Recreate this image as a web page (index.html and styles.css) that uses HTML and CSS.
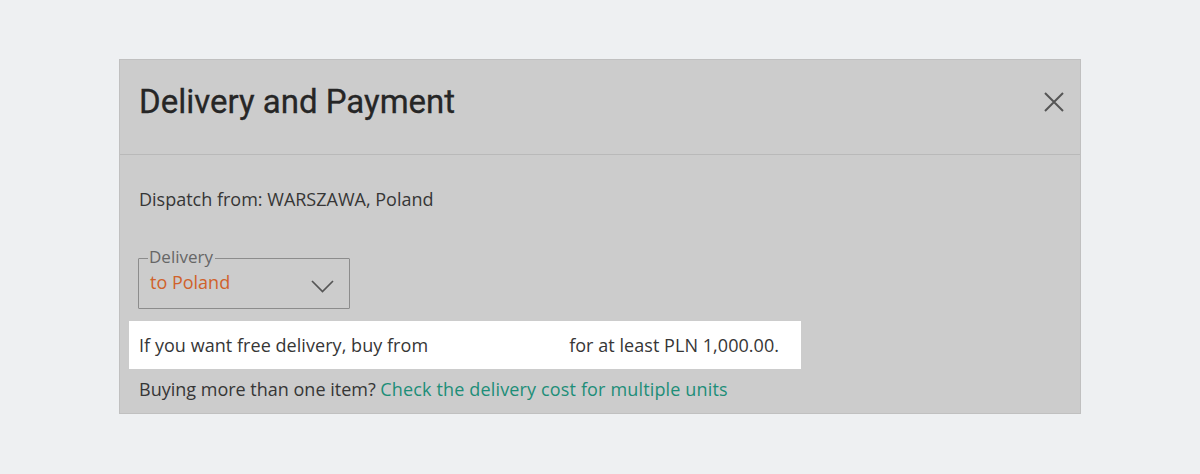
FILE: index.html
```html
<!DOCTYPE html>
<html>
<head>
<meta charset="utf-8">
<link rel="stylesheet" href="styles.css">
</head>
<body>
<div class="page">
  <div class="modal">
    <div class="modal-header">
      <h1 class="title">Delivery and Payment</h1>
      <button class="close" aria-label="Close">
        <svg width="20" height="20" viewBox="0 0 20 20"><path d="M1 1 L19 19 M19 1 L1 19" stroke="#555" stroke-width="2" fill="none"/></svg>
      </button>
    </div>
    <div class="modal-body">
      <p class="dispatch">Dispatch from: WARSZAWA, Poland</p>
      <div class="select">
        <span class="select-label">Delivery</span>
        <span class="select-value">to Poland</span>
        <svg class="chevron" width="23" height="13" viewBox="0 0 23 13"><path d="M1 1 L11.5 11.5 L22 1" stroke="#555" stroke-width="1.7" fill="none"/></svg>
      </div>
      <div class="free">
        <span>If you want free delivery, buy from</span><span class="gap"></span><span>for at least PLN 1,000.00.</span>
      </div>
      <p class="multi">Buying more than one item? <a class="link" href="#">Check the delivery cost for multiple units</a></p>
    </div>
  </div>
</div>
</body>
</html>
```

FILE: styles.css
```css
html, body {
  margin: 0;
  padding: 0;
}
body {
  background: #eef0f2;
  width: 1200px;
  height: 474px;
  overflow: hidden;
  font-family: "Open Sans", "Liberation Sans", sans-serif;
}
.page {
  padding-top: 59px;
  padding-left: 119px;
}
.modal {
  width: 960px;
  height: 353px;
  background: #cccccc;
  border: 1px solid #c0c0c0;
}
.modal-header {
  height: 95px;
  box-sizing: border-box;
  padding: 0 16px 10px 19px;
  border-bottom: 1px solid #b9b9b9;
  display: flex;
  align-items: center;
  justify-content: space-between;
}
.title {
  margin: 0;
  font-family: Roboto, "Liberation Sans", sans-serif;
  font-weight: 400;
  font-size: 33px;
  line-height: 40px;
  color: #262626;
  -webkit-text-stroke: 0.3px #262626;
}
.close {
  background: none;
  border: 0;
  padding: 0;
  width: 20px;
  height: 20px;
  display: flex;
}
.modal-body {
  padding: 0 9px;
}
.dispatch {
  margin: 0;
  padding: 32px 10px 0;
  font-size: 18px;
  line-height: 24px;
  color: #363636;
}
.select {
  margin: 47px 0 0 9px;
  width: 212px;
  height: 51px;
  box-sizing: border-box;
  border: 1px solid #8c8c8c;
  border-radius: 1px;
  padding: 0 15px 0 11px;
  position: relative;
  display: flex;
  align-items: center;
  justify-content: space-between;
}
.select-label {
  position: absolute;
  left: 9px;
  top: -13px;
  padding: 0 2px 0 1px;
  background: #cccccc;
  font-size: 17px;
  line-height: 22px;
  color: #666;
}
.select-value {
  font-size: 18px;
  line-height: 24px;
  color: #d0622b;
  margin-top: -4px;
}
.chevron {
  margin-top: 5px;
}
.free {
  margin-top: 12px;
  width: 672px;
  height: 48px;
  background: #fff;
  display: flex;
  align-items: center;
  padding-left: 10px;
  box-sizing: border-box;
  font-size: 18px;
  color: #363636;
  letter-spacing: 0.05px;
}
.gap {
  width: 141px;
}
.multi {
  margin: 8px 0 0 10px;
  font-size: 18px;
  line-height: 24px;
  color: #363636;
}
.link {
  color: #1d8e78;
  text-decoration: none;
  letter-spacing: 0.15px;
}
```
